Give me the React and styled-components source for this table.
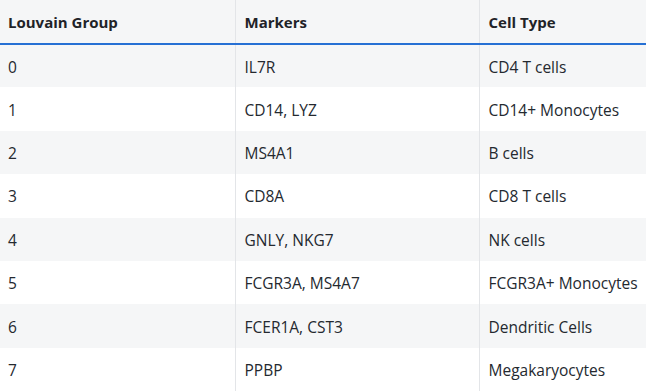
import React from 'react';
import styled, { createGlobalStyle } from 'styled-components';

const GlobalStyle = createGlobalStyle`
    html, body {
        margin: 0;
        padding: 0;
        background: #ffffff;
    }
    body {
        font-family: "Open Sans", "Noto Sans", "Liberation Sans", sans-serif;
        color: #1f2328;
    }
`;

const rows = [
    { group: '0', markers: 'IL7R', cell: 'CD4 T cells' },
    { group: '1', markers: 'CD14, LYZ', cell: 'CD14+ Monocytes' },
    { group: '2', markers: 'MS4A1', cell: 'B cells' },
    { group: '3', markers: 'CD8A', cell: 'CD8 T cells' },
    { group: '4', markers: 'GNLY, NKG7', cell: 'NK cells' },
    { group: '5', markers: 'FCGR3A, MS4A7', cell: 'FCGR3A+ Monocytes' },
    { group: '6', markers: 'FCER1A, CST3', cell: 'Dendritic Cells' },
    { group: '7', markers: 'PPBP', cell: 'Megakaryocytes' },
];

const Table = styled.table`
    width: 646px;
    border-collapse: collapse;
    table-layout: fixed;
    font-size: 15.5px;

    col.group { width: 235px; }
    col.markers { width: 244px; }
    col.cell { width: 167px; }
`;

const HeadRow = styled.tr`
    background: #f5f6f7;
    border-bottom: 2px solid #2670d4;
`;

const HeadCell = styled.th`
    height: 44px;
    box-sizing: border-box;
    padding: 1px 9px 0;
    text-align: left;
    font-size: 15px;
    font-weight: 700;
    white-space: nowrap;
    border-left: 1px solid #e3e5e8;

    &:first-child {
        border-left: none;
        padding-left: 8px;
    }
`;

const Row = styled.tr`
    background: ${({ $striped }) => ($striped ? '#f5f6f7' : '#ffffff')};
`;

const Cell = styled.td`
    height: 43.4px;
    box-sizing: border-box;
    padding: 1px 9px 0;
    white-space: nowrap;
    color: #24292f;
    border-left: 1px solid #e3e5e8;

    &:first-child {
        border-left: none;
        padding-left: 8px;
    }
`;

const App = () => {
    return (
        <>
            <GlobalStyle />
            <Table>
                <colgroup>
                    <col className="group" />
                    <col className="markers" />
                    <col className="cell" />
                </colgroup>
                <thead>
                    <HeadRow>
                        <HeadCell>Louvain Group</HeadCell>
                        <HeadCell>Markers</HeadCell>
                        <HeadCell>Cell Type</HeadCell>
                    </HeadRow>
                </thead>
                <tbody>
                    {rows.map(({ group, markers, cell }, i) => (
                        <Row key={group} $striped={i % 2 === 0}>
                            <Cell>{group}</Cell>
                            <Cell>{markers}</Cell>
                            <Cell>{cell}</Cell>
                        </Row>
                    ))}
                </tbody>
            </Table>
        </>
    );
};

export default App;
